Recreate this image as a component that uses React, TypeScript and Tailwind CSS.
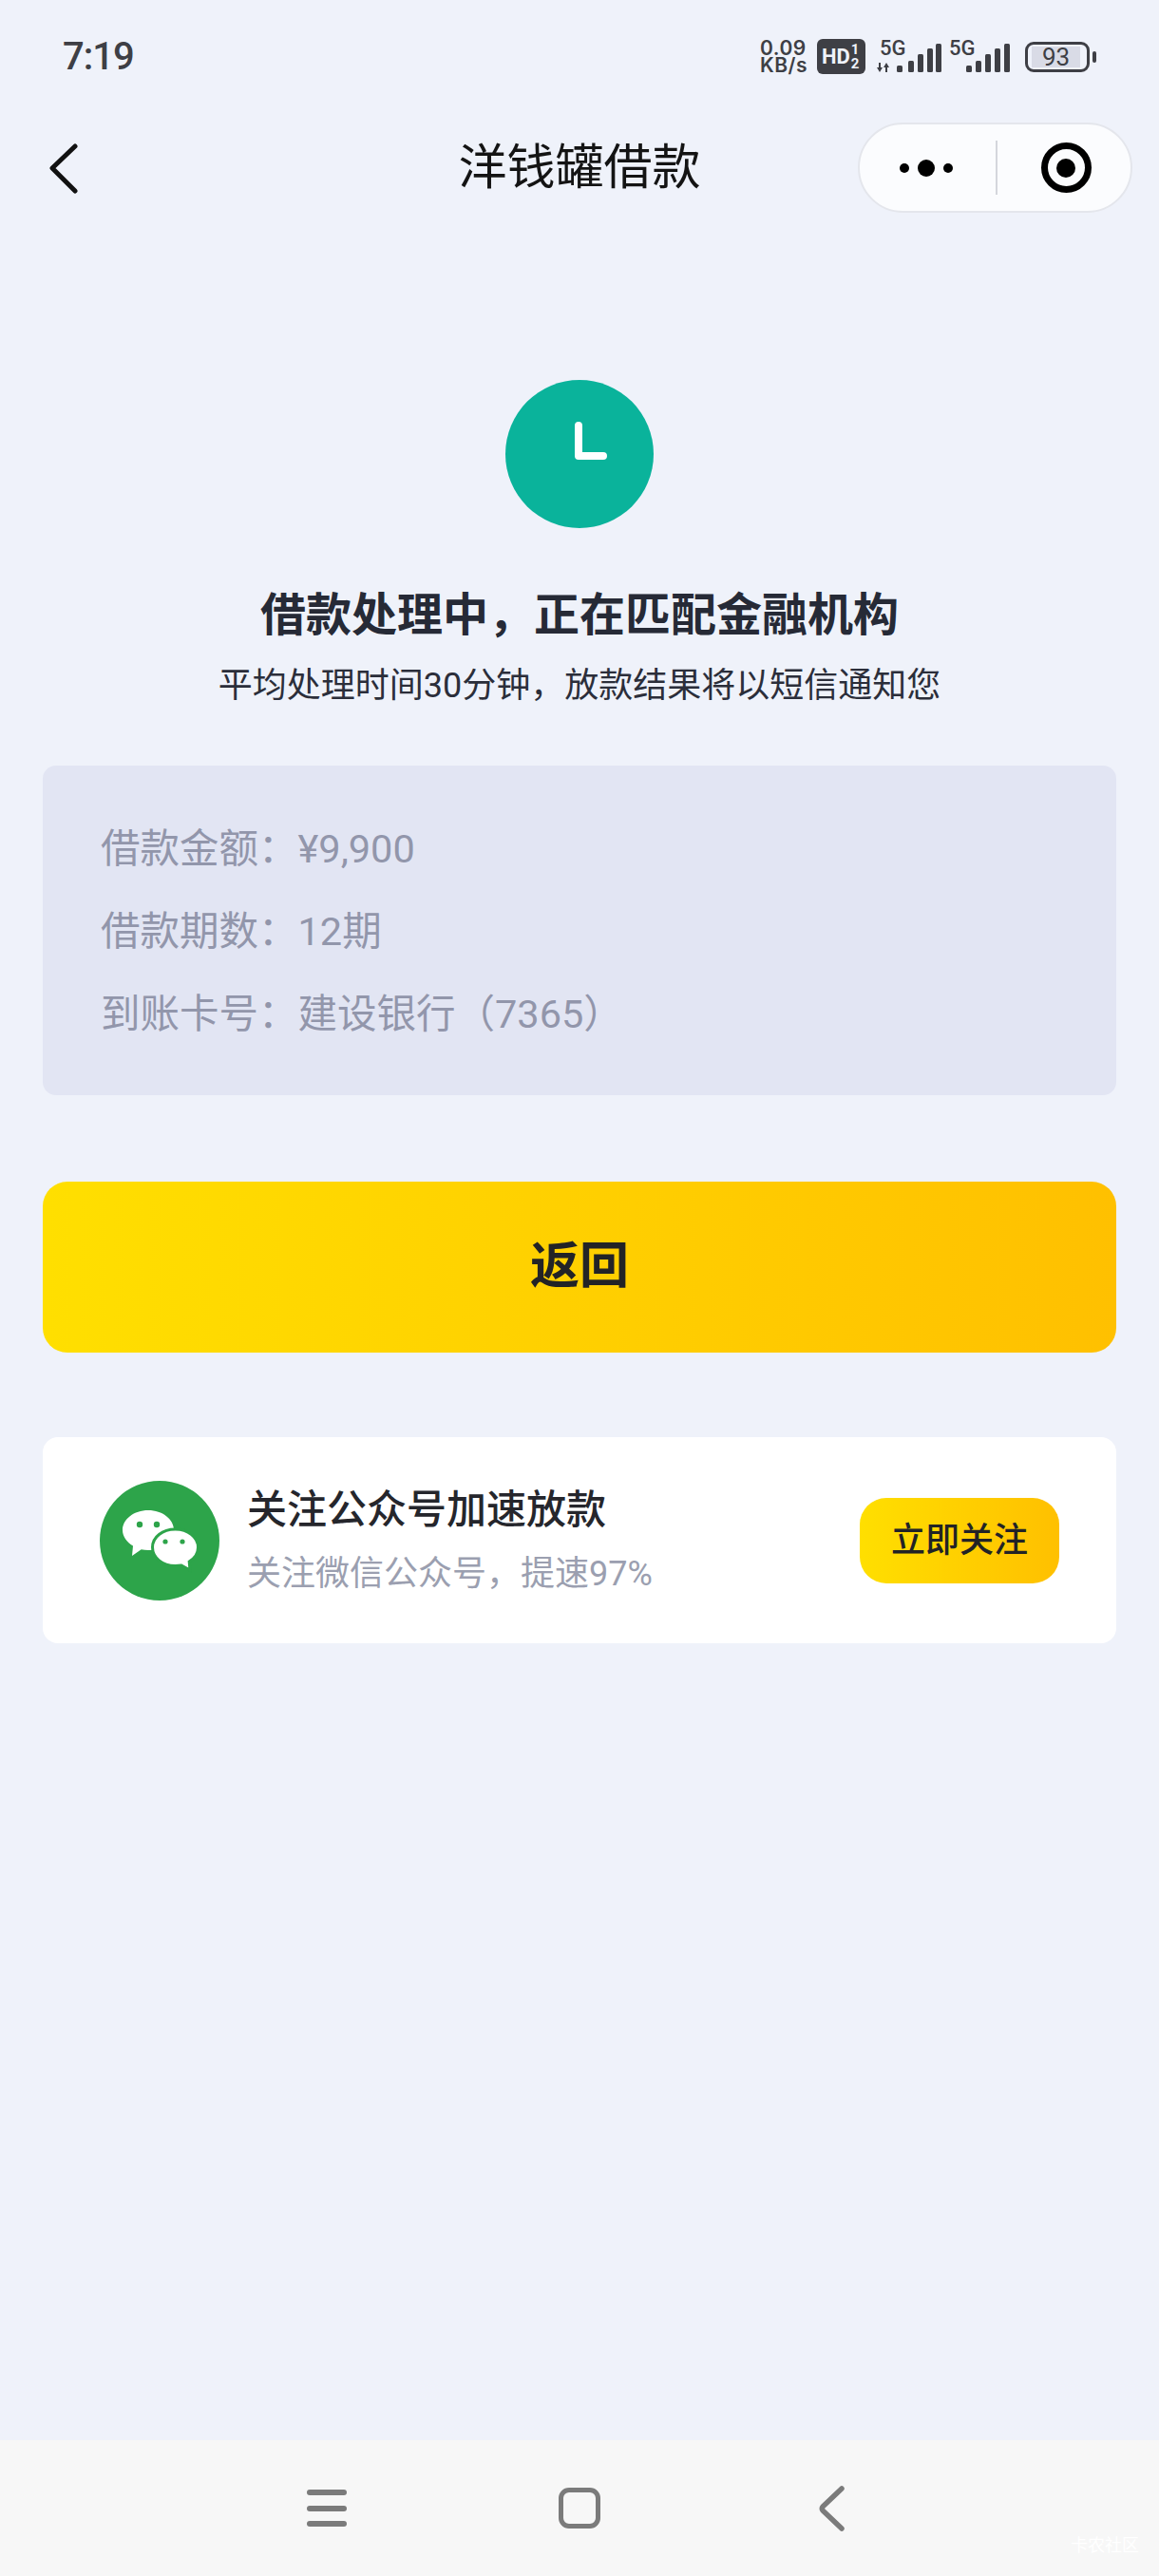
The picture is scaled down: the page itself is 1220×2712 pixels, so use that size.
const CJK = "font-['Roboto','Noto_Sans_CJK_SC',sans-serif]";

function Bars({ xs }: { xs: number[] }) {
  const tops = [27, 22, 15, 9, 4];
  return (
    <>
      {xs.map((x, i) => (
        <rect key={x} x={x} y={tops[i]} width="6" height={34 - tops[i]} rx="1.500" />
      ))}
    </>
  );
}

function StatusIcons() {
  return (
    <div className="flex items-center pb-[1px] pr-[66px] font-['Roboto',sans-serif] text-[#3e3f45]">
      <div className="w-[52px] font-['Inter',sans-serif] text-[21px] font-semibold leading-[18px] tracking-[0.5px]">
        0.09
        <br />
        KB/s
      </div>
      <div className="ml-[8px] flex h-[37px] w-[51px] items-center rounded-[6px] bg-[#3e3f45] pl-[5px] font-bold text-[#eff2fa]">
        <span className="text-[22px] leading-none">HD</span>
        <span className="ml-[1px] flex flex-col text-[15px] leading-[15px]">
          <span>1</span>
          <span>2</span>
        </span>
      </div>
      <div className="relative ml-[12px] h-[36px] w-[68px]">
        <svg width="68" height="36" viewBox="0 0 68 36" className="absolute left-0 top-0" fill="#3e3f45">
          <polygon points="0,29 2,29 2,24 4,24 4,29 6,29 3,34" />
          <polygon points="7,29 10,24 13,29 11,29 11,34 9,34 9,29" />
          <Bars xs={[21, 33, 43, 53, 62]} />
        </svg>
        <span className="absolute left-[3px] top-[-3px] text-[22px] font-medium leading-[24px]">5G</span>
      </div>
      <div className="relative ml-[8px] h-[36px] w-[64px]">
        <svg width="64" height="36" viewBox="0 0 64 36" className="absolute left-0 top-0" fill="#3e3f45">
          <Bars xs={[18, 28, 38, 48, 58]} />
        </svg>
        <span className="absolute left-0 top-[-3px] text-[22px] font-medium leading-[24px]">5G</span>
      </div>
      <div className="ml-[16px] flex items-center">
        <div className="flex h-[32px] w-[68px] items-stretch rounded-[9px] border-[3px] border-[#3e3f45] py-[2px] pl-[4px]">
          <div className="flex w-[51px] items-center justify-center bg-[#d9dbe6] text-[26px] font-normal leading-none">
            93
          </div>
        </div>
        <div className="ml-[3px] h-[12px] w-[4px] rounded-[2px] bg-[#3e3f45]" />
      </div>
    </div>
  );
}

function WeChatLogo() {
  return (
    <svg width="126" height="126" viewBox="0 0 126 126" className="shrink-0">
      <circle cx="63" cy="63" r="63" fill="#2da44a" />
      <path d="M51 31c15 0 27 9.500 27 21s-12 21-27 21c-2.500 0-5-.3-7.300-.8L34 79l1-10.500C28.500 64.500 24 58.700 24 52c0-11.500 12-21 27-21z" fill="#fff" />
      <path d="M79.500 51c13.500 0 24 8.500 24 19 0 6.200-3.600 11.600-9.300 15L95 94l-9-5c-2 .3-4.300.5-6.500.5-13.500 0-24-8.700-24-19.500S66 51 79.500 51z" fill="#fff" stroke="#2da44a" strokeWidth="3" />
      <circle cx="42" cy="46" r="3.200" fill="#2da44a" />
      <circle cx="60" cy="46" r="3.200" fill="#2da44a" />
      <circle cx="69" cy="64" r="2.600" fill="#2da44a" />
      <circle cx="87" cy="64" r="2.600" fill="#2da44a" />
    </svg>
  );
}

export default function App() {
  return (
    <div className={`flex h-[2712px] w-[1220px] flex-col bg-[#eff2fa] ${CJK}`}>
      <div className="flex h-[120px] items-center justify-between">
        <span className="pl-[66px] text-[40px] font-medium leading-none tracking-[-1px] text-[#3e3f45]">7:19</span>
        <StatusIcons />
      </div>

      <div className="mt-[9px] grid h-[95px] grid-cols-[1fr_auto_1fr] items-center px-[28px]">
        <div className="pl-[22px]">
          <svg width="32" height="54" viewBox="0 0 32 54" className="block" fill="none" stroke="#111" strokeWidth="5" strokeLinecap="round" strokeLinejoin="round">
            <path d="M29 4 5 27l24 24" />
          </svg>
        </div>
        <h1 className="text-[51px] font-normal leading-none text-[#141414]">洋钱罐借款</h1>
        <div className="flex h-[95px] w-[289px] items-center justify-self-end rounded-full border-2 border-[#e4e6ec] bg-[#fbfcfe]">
          <div className="flex w-[143px] items-center gap-[9px] pl-[42px]">
            <span className="h-[10px] w-[10px] rounded-full bg-black" />
            <span className="h-[18px] w-[18px] rounded-full bg-black" />
            <span className="h-[10px] w-[10px] rounded-full bg-black" />
          </div>
          <div className="h-[57px] w-[2px] bg-[#d4d6dc]" />
          <div className="flex flex-1 items-center justify-center pl-[4px]">
            <span className="flex h-[53px] w-[53px] items-center justify-center rounded-full border-[7px] border-black">
              <span className="h-[20px] w-[20px] rounded-full bg-black" />
            </span>
          </div>
        </div>
      </div>

      <div className="mt-[176px] flex flex-col items-center px-[45px]">
        <div className="flex h-[156px] w-[156px] items-center justify-center rounded-full bg-[#0ab39b]">
          <svg width="156" height="156" viewBox="0 0 156 156" fill="none" stroke="#fff" strokeWidth="8" strokeLinecap="round" strokeLinejoin="round">
            <path d="M77 48v32h26" />
          </svg>
        </div>
        <h2 className="mt-[62px] text-[48px] font-semibold leading-[60px] text-[#262a36]">借款处理中，正在匹配金融机构</h2>
        <p className="mt-[19px] text-[36px] leading-[50px] text-[#2b2e3a]">平均处理时间30分钟，放款结果将以短信通知您</p>

        <div className="mt-[59px] w-full rounded-[14px] bg-[#e2e5f3] px-[61px] pb-[42px] pt-[44px] text-[41.500px] leading-[87px] text-[#9296ab]">
          <div>借款金额：¥9,900</div>
          <div>借款期数：12期</div>
          <div>到账卡号：建设银行（7365）</div>
        </div>

        <button className="mt-[91px] h-[180px] w-full rounded-[26px] bg-gradient-to-r from-[#ffdf00] to-[#ffc000] text-[52px] font-bold leading-none text-[#222326]">
          返回
        </button>

        <div className="mt-[89px] flex h-[217px] w-full items-center rounded-[16px] bg-white pl-[60px] pr-[60px]">
          <WeChatLogo />
          <div className="ml-[29px] flex flex-1 flex-col">
            <span className="text-[42px] font-medium leading-[56px] text-[#25262c]">关注公众号加速放款</span>
            <span className="mt-[14px] text-[36px] leading-[50px] text-[#9b9fb0]">关注微信公众号，提速97%</span>
          </div>
          <button className="h-[90px] w-[210px] rounded-[28px] bg-gradient-to-r from-[#ffdf00] to-[#ffc000] text-[36px] font-medium leading-none text-[#222326]">
            立即关注
          </button>
        </div>
      </div>

      <div className="relative mt-auto flex h-[143px] items-center bg-[#f7f7f7] pl-[323px]">
        <div className="flex h-[39px] w-[42px] flex-col justify-between">
          <span className="h-[6px] rounded-full bg-[#7b7b7b]" />
          <span className="h-[6px] rounded-full bg-[#7b7b7b]" />
          <span className="h-[6px] rounded-full bg-[#7b7b7b]" />
        </div>
        <div className="ml-[223px] h-[43px] w-[44px] rounded-[11px] border-[5px] border-[#7b7b7b]" />
        <svg width="30" height="48" viewBox="0 0 30 48" className="ml-[228px] block" fill="none" stroke="#7b7b7b" strokeWidth="5.500" strokeLinecap="round" strokeLinejoin="round">
          <path d="M26 3 6 22a3 3 0 0 0 0 4l20 19" />
        </svg>
        <span className="absolute right-[21px] top-[101px] text-[18px] leading-[20px] text-white">卡农社区</span>
      </div>
    </div>
  );
}
